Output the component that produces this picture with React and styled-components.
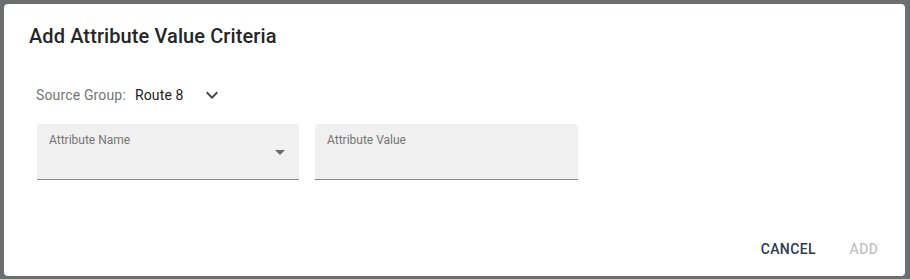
import React from 'react';
import styled, { createGlobalStyle } from 'styled-components';

const GlobalStyle = createGlobalStyle`
  html, body {
    margin: 0;
    padding: 0;
    background: #6e6f70;
  }
  body {
    font-family: Roboto, "Liberation Sans", Arial, sans-serif;
  }
`;

const Backdrop = styled.div`
  width: 910px;
  height: 279px;
  box-sizing: border-box;
  padding: 4px 5px 3px 4px;
  background: #6d6e6f;
`;

const Dialog = styled.div`
  height: 100%;
  background: #ffffff;
  border-radius: 4px;
  display: flex;
  flex-direction: column;
`;

const Title = styled.h2`
  margin: 0;
  padding: 16px 25px;
  font-size: 20px;
  line-height: 32px;
  font-weight: 500;
  color: #262626;
  letter-spacing: 0.1px;
`;

const Content = styled.div`
  padding: 15px 32px 0 33px;
  display: flex;
  flex-direction: column;
  gap: 17px;
`;

const GroupRow = styled.div`
  display: flex;
  align-items: center;
  height: 24px;
  font-size: 14px;
  letter-spacing: 0.15px;
  margin-left: -1px;
`;

const GroupLabel = styled.span`
  color: #757575;
  margin-right: 9px;
`;

const GroupValue = styled.span`
  color: #212121;
`;

const ExpandButton = styled.span`
  display: flex;
  margin-left: 16px;
  color: #4a4a4a;
`;

const Fields = styled.div`
  display: flex;
  gap: 16px;
`;

const Field = styled.div`
  position: relative;
  width: ${p => p.width}px;
  height: 56px;
  box-sizing: border-box;
  background: #f0f0f0;
  border-radius: 4px 4px 0 0;
  border-bottom: 1px solid #8a8a8a;
  padding: 8px 12px 0;
`;

const FieldLabel = styled.label`
  display: block;
  font-size: 12px;
  line-height: 16px;
  color: #757575;
`;

const DropIcon = styled.span`
  position: absolute;
  right: 7px;
  top: 16px;
  display: flex;
  color: #6b6b6b;
`;

const Actions = styled.div`
  margin-top: auto;
  display: flex;
  justify-content: flex-end;
  gap: 8px;
  padding: 8px 9px 9px 8px;
`;

const Button = styled.button`
  min-width: 64px;
  height: 36px;
  padding: 0 8px;
  border: none;
  background: none;
  font-family: Roboto, "Liberation Sans", Arial, sans-serif;
  font-size: 14px;
  font-weight: 500;
  letter-spacing: 0.4px;
  text-transform: uppercase;
  color: ${p => (p.disabled ? 'rgba(0, 0, 0, 0.26)' : '#2b3a52')};
  cursor: ${p => (p.disabled ? 'default' : 'pointer')};
`;

const ExpandMore = () => (
  <svg width="24" height="24" viewBox="0 0 24 24" fill="currentColor">
    <path d="M16.59 8.59 12 13.17 7.41 8.59 6 10l6 6 6-6z" />
  </svg>
);

const ArrowDropDown = () => (
  <svg width="24" height="24" viewBox="0 0 24 24" fill="currentColor">
    <path d="M7 10l5 5 5-5z" />
  </svg>
);

const App = () => (
  <>
    <GlobalStyle />
    <Backdrop>
      <Dialog>
        <Title>Add Attribute Value Criteria</Title>
        <Content>
          <GroupRow>
            <GroupLabel>Source Group:</GroupLabel>
            <GroupValue>Route 8</GroupValue>
            <ExpandButton>
              <ExpandMore />
            </ExpandButton>
          </GroupRow>
          <Fields>
            <Field width={262}>
              <FieldLabel>Attribute Name</FieldLabel>
              <DropIcon>
                <ArrowDropDown />
              </DropIcon>
            </Field>
            <Field width={263}>
              <FieldLabel>Attribute Value</FieldLabel>
            </Field>
          </Fields>
        </Content>
        <Actions>
          <Button>Cancel</Button>
          <Button disabled>Add</Button>
        </Actions>
      </Dialog>
    </Backdrop>
  </>
);

export default App;
